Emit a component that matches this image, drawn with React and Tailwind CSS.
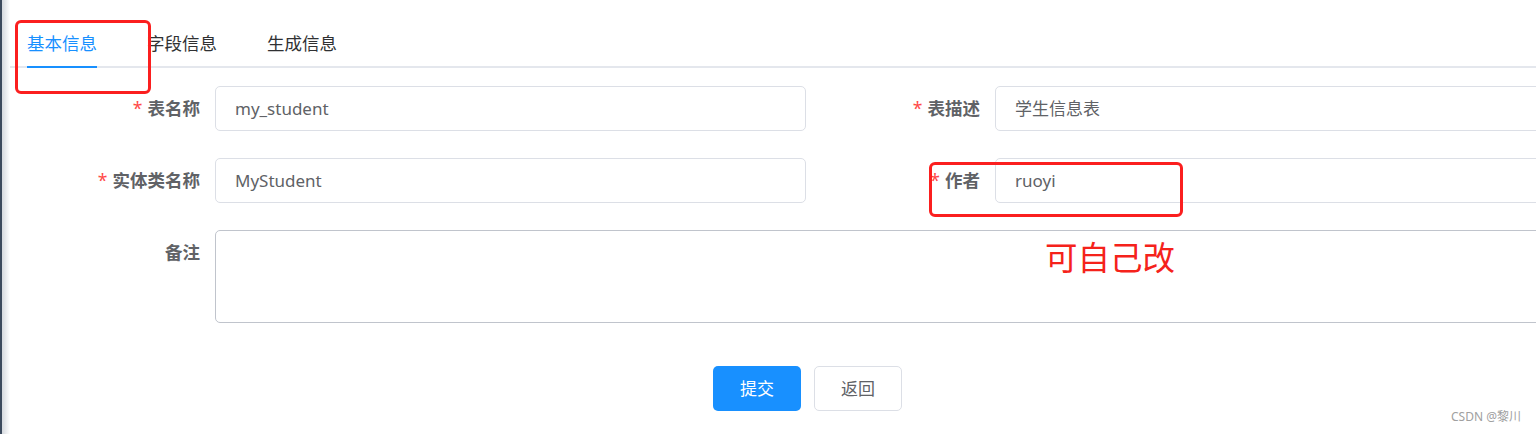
import React from 'react';

const font = { fontFamily: '"Noto Sans", "Noto Sans CJK SC", sans-serif' };

function Label({ text, required }) {
  return (
    <div className="h-[45px] flex items-center justify-end pr-[15px] text-[17.5px] font-bold text-[#606266]">
      {required && <span className="text-[#ff4949] mr-[5px] font-normal">*</span>}
      {text}
    </div>
  );
}

function Input({ value }) {
  return (
    <div className="h-[45px] flex items-center px-[19px] border border-[#dcdfe6] rounded-[5px] text-[17px] text-[#606266] bg-white">
      {value}
    </div>
  );
}

export default function App() {
  return (
    <div className="relative w-[1536px] h-[434px] overflow-hidden bg-white" style={font}>
      {/* page edge */}
      <div className="absolute left-0 top-0 h-full w-[10px] flex">
        <div className="w-[2px] h-full bg-[#3c4a5d]" />
        <div className="w-[8px] h-full bg-gradient-to-r from-[#d5d9de] to-white" />
      </div>

      {/* tabs */}
      <div className="pt-[30px] border-b-2 border-[#e4e7ed]">
        <div className="flex gap-[50px] ml-[27px] text-[17.5px] leading-[26px] text-[#303133]">
          <div className="pb-[10px] border-b-2 border-[#1890ff] -mb-[2px] text-[#1890ff]">基本信息</div>
          <div className="pb-[10px]">字段信息</div>
          <div className="pb-[10px]">生成信息</div>
        </div>
      </div>

      {/* form */}
      <div className="pt-[18px] w-[1700px]">
        <div className="grid grid-cols-[215px_591px_189px_600px] gap-y-[27px]">
          <Label text="表名称" required />
          <Input value="my_student" />
          <Label text="表描述" required />
          <Input value="学生信息表" />

          <Label text="实体类名称" required />
          <Input value="MyStudent" />
          <Label text="作者" required />
          <Input value="ruoyi" />

          <Label text="备注" />
          <div className="col-span-3 h-[93px] border border-[#c0c4cc] rounded-[5px] bg-white" />
        </div>

        <div className="flex gap-[13px] ml-[713px] mt-[43px]">
          <button className="w-[88px] h-[45px] rounded-[5px] bg-[#1890ff] text-white text-[17px]">提交</button>
          <button className="w-[88px] h-[45px] rounded-[5px] border border-[#dcdfe6] bg-white text-[#606266] text-[17px]">返回</button>
        </div>
      </div>

      {/* annotations */}
      <div className="absolute left-[15px] top-[20px] w-[136px] h-[74px] border-[3px] border-[#fb1f1f] rounded-[6px]" />
      <div className="absolute left-[929px] top-[162px] w-[254px] h-[55px] border-[3px] border-[#fb1f1f] rounded-[6px]" />
      <div className="absolute left-[1045px] top-[236px] text-[32.5px] leading-[44px] text-[#f5221b]">可自己改</div>

      <div className="absolute right-[15px] bottom-[8px] text-[12px] text-[#a0a0a0]">CSDN @黎川</div>
    </div>
  );
}
